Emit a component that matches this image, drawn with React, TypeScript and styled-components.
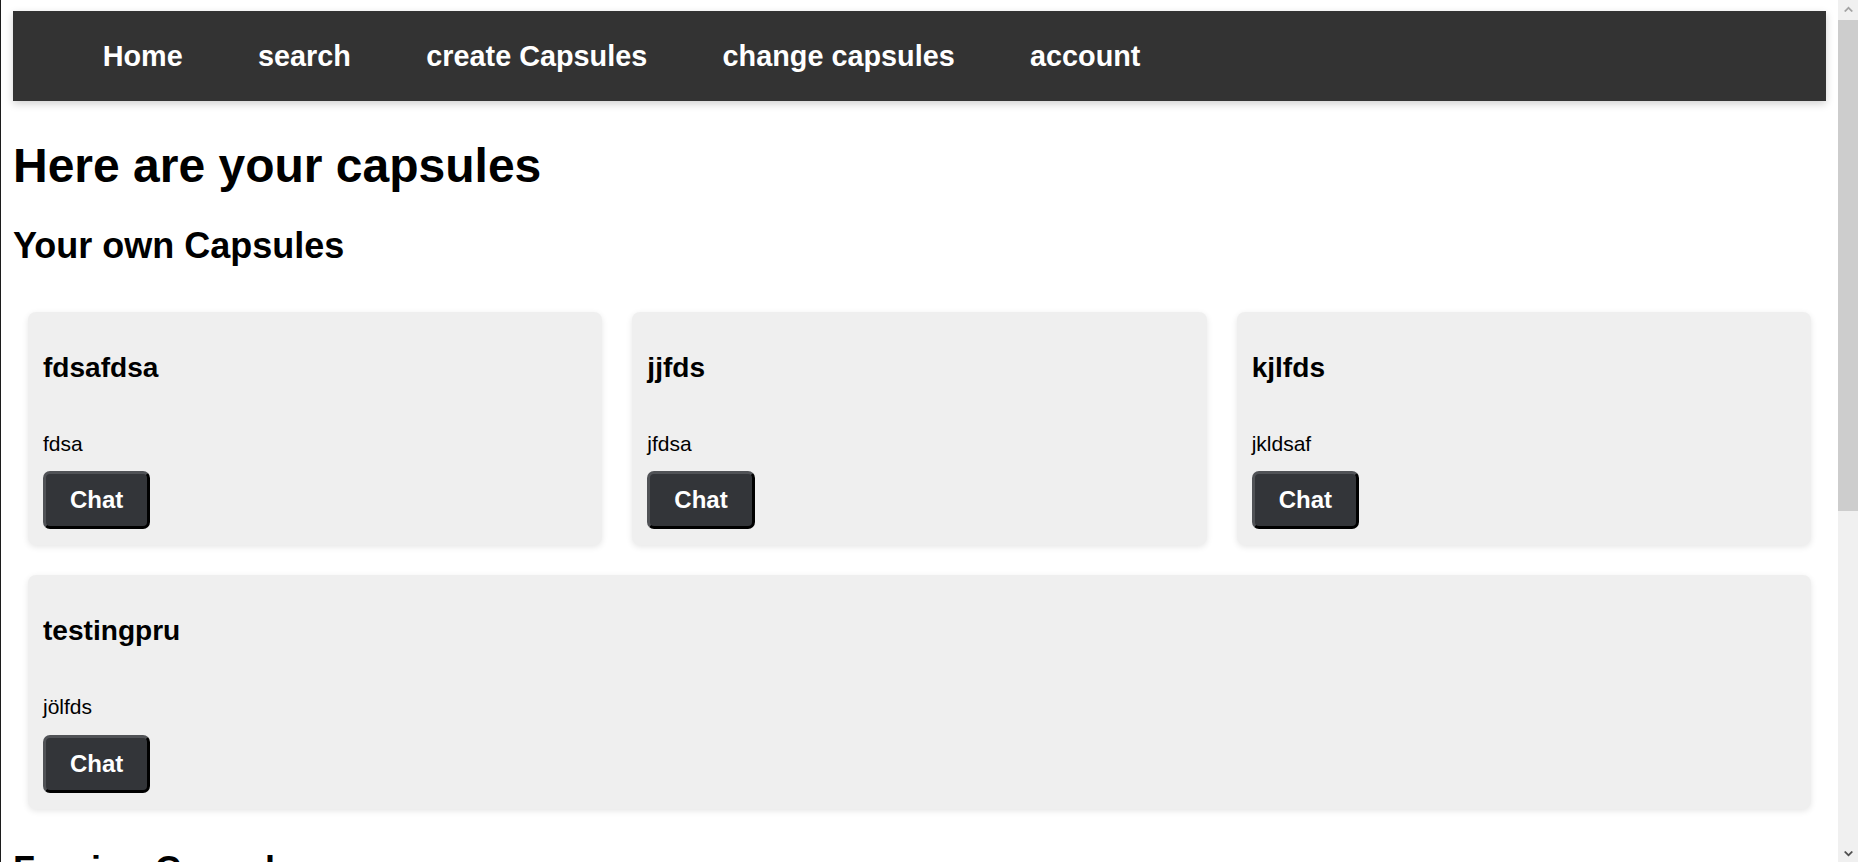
import React from "react";
import styled, { createGlobalStyle } from "styled-components";

const GlobalStyle = createGlobalStyle`
  html, body {
    margin: 0;
    padding: 0;
    height: 100%;
    overflow: hidden;
    background: #ffffff;
  }
  body {
    font-family: "Liberation Sans", Arial, sans-serif;
    color: #000;
  }
  #root { height: 100%; }
`;

const Window = styled.div`
  display: flex;
  height: 100vh;
  border-left: 1px solid #1c1c1c;
  box-sizing: border-box;
`;

const Viewport = styled.div`
  flex: 1;
  min-width: 0;
  overflow: hidden;
  padding: 11px 12px 12px 12px;
`;

const Scrollbar = styled.div`
  width: 20px;
  flex: 0 0 20px;
  display: flex;
  flex-direction: column;
  background: #f0f0f0;
`;

const ArrowBox = styled.div`
  height: 17px;
  display: flex;
  align-items: center;
  justify-content: center;
`;

const Track = styled.div`
  flex: 1;
  display: flex;
  flex-direction: column;
`;

const Thumb = styled.div`
  margin-top: 3px;
  height: 491px;
  background: #cdcdcd;
`;

const Nav = styled.nav`
  height: 90px;
  background: #333333;
  display: flex;
  align-items: center;
  padding: 0 52px;
  box-shadow: 0 3px 8px rgba(0, 0, 0, 0.18);
`;

const NavLink = styled.a`
  color: #ffffff;
  font-weight: bold;
  font-size: 28.8px;
  padding: 0 37.7px;
  text-decoration: none;
  white-space: nowrap;
`;

const Title = styled.h1`
  font-size: 48px;
  font-weight: bold;
  margin: 37px 0 32px 0;
`;

const SectionTitle = styled.h2`
  font-size: 36px;
  font-weight: bold;
  margin: 30px 0;
`;

const CardList = styled.div<{ $top: number }>`
  display: flex;
  flex-wrap: wrap;
  gap: 30px;
  padding: ${(p) => p.$top}px 15px 10px 15px;
`;

const Card = styled.div`
  flex: 1 1 500px;
  background: #efefef;
  border-radius: 8px;
  padding: 15px 15px 16.2px 15px;
  box-shadow: 0 2px 6px rgba(0, 0, 0, 0.1);
`;

const CardTitle = styled.h3`
  font-size: 28.08px;
  font-weight: bold;
  margin: 25px 0 48px 0;
`;

const CardText = styled.p`
  font-size: 21px;
  margin: 0 0 15.3px 0;
`;

const ChatButton = styled.button`
  font-family: "Liberation Sans", Arial, sans-serif;
  font-size: 24px;
  font-weight: bold;
  color: #ffffff;
  background: #333539;
  padding: 12px 24px;
  border: 3px solid;
  border-color: #505256 #000000 #000000 #505256;
  border-radius: 7px;
  line-height: normal;
  cursor: pointer;
`;

type Capsule = { name: string; text: string };

const own: Capsule[] = [
  { name: "fdsafdsa", text: "fdsa" },
  { name: "jjfds", text: "jfdsa" },
  { name: "kjlfds", text: "jkldsaf" },
  { name: "testingpru", text: "jölfds" },
];

const foreign: Capsule[] = [
  { name: "shared", text: "shared capsule" },
];

const CapsuleCard = ({ c }: { c: Capsule }) => (
  <Card>
    <CardTitle>{c.name}</CardTitle>
    <CardText>{c.text}</CardText>
    <ChatButton>Chat</ChatButton>
  </Card>
);

export default function App() {
  return (
    <>
      <GlobalStyle />
      <Window>
        <Viewport>
          <Nav>
            <NavLink href="#">Home</NavLink>
            <NavLink href="#">search</NavLink>
            <NavLink href="#">create Capsules</NavLink>
            <NavLink href="#">change capsules</NavLink>
            <NavLink href="#">account</NavLink>
          </Nav>
          <Title>Here are your capsules</Title>
          <SectionTitle>Your own Capsules</SectionTitle>
          <CardList $top={15}>
            {own.map((c) => (
              <CapsuleCard key={c.name} c={c} />
            ))}
          </CardList>
          <SectionTitle>Foreign Capsules</SectionTitle>
          <CardList $top={15}>
            {foreign.map((c) => (
              <CapsuleCard key={c.name} c={c} />
            ))}
          </CardList>
        </Viewport>
        <Scrollbar>
          <ArrowBox>
            <svg width="9" height="6" viewBox="0 0 9 6">
              <polygon points="0,5 4.5,0.5 9,5 7.5,6 4.5,3 1.5,6" fill="#a3a3a3" />
            </svg>
          </ArrowBox>
          <Track>
            <Thumb />
          </Track>
          <ArrowBox>
            <svg width="9" height="6" viewBox="0 0 9 6">
              <polygon points="0,1 4.5,5.5 9,1 7.5,0 4.5,3 1.5,0" fill="#505050" />
            </svg>
          </ArrowBox>
        </Scrollbar>
      </Window>
    </>
  );
}
